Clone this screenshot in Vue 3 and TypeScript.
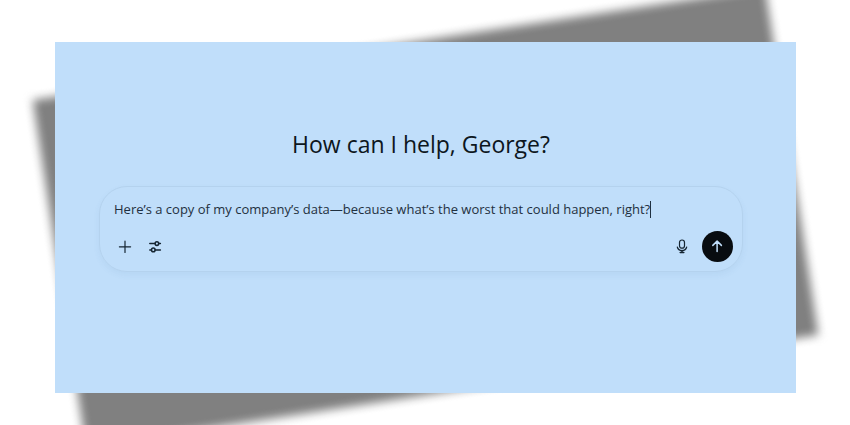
<script setup lang="ts">
import { ref } from 'vue'

const userName = 'George'
const message = ref('Here’s a copy of my company’s data—because what’s the worst that could happen, right?')

function send(): void {
  message.value = message.value.trim()
}
</script>

<template>
  <main class="page">
    <section class="card">
      <h1 class="greeting">How can I help, {{ userName }}?</h1>
      <form class="composer" @submit.prevent="send">
        <div class="entry">
          <input v-model="message" class="message" type="text" aria-label="Message" autocomplete="off" spellcheck="false" />
          <span class="caret" aria-hidden="true"></span>
        </div>
        <div class="actions">
          <button class="tool" type="button" aria-label="Add attachment">
            <svg width="14" height="14" viewBox="0 0 14 14"><path d="M7 1.2v11.2M1.4 6.8h11.2" /></svg>
          </button>
          <button class="tool" type="button" aria-label="Tools">
            <svg class="bold" width="14" height="14" viewBox="0 0 14 14">
              <path d="M1.8 3.6h5M10.9 3.6h1.5M1.8 9.9h1.4M7.2 9.9h5.2" />
              <circle cx="8.9" cy="3.6" r="1.8" />
              <circle cx="5.3" cy="9.9" r="1.8" />
            </svg>
          </button>
          <button class="tool mic" type="button" aria-label="Dictate">
            <svg width="14" height="16" viewBox="0 0 14 16">
              <rect x="4.5" y="1" width="5" height="8.2" rx="2.5" />
              <path d="M2.3 8c.5 2.2 2.3 3.6 4.7 3.6s4.2-1.4 4.7-3.6" />
              <path class="bold" d="M7 11.6v1.6M5.2 13.5h3.6" />
            </svg>
          </button>
          <button class="send" type="submit" aria-label="Send message">
            <svg width="15" height="15" viewBox="0 0 15 15"><path d="M7.1 12.4V2.2M2.8 6.4l4.3-4.3 4.3 4.3" /></svg>
          </button>
        </div>
      </form>
    </section>
  </main>
</template>

<style>
body {
  background: #fff;
}
</style>

<style scoped>
.page {
  box-sizing: border-box;
  display: flex;
  min-height: 100vh;
  padding: 42px 54px 32px 55px;
  overflow: hidden;
  font-family: "Open Sans", "Noto Sans", sans-serif;
  color: #0d1620;
}

.card {
  position: relative;
  isolation: isolate;
  flex: 1;
  min-width: 0;
  padding: 86px 53px 0 44px;
}

/* The card face lies over its tilted, soft shadow */
.card::before,
.card::after {
  content: "";
  position: absolute;
  inset: 0;
  z-index: -1;
  background: #c0defa;
}

.card::before {
  z-index: -2;
  background: #808080;
  transform: rotate(-8.7deg);
  filter: blur(5px);
}

.greeting {
  margin: 0 0 26px;
  font-size: 23px;
  font-weight: 400;
  line-height: 32px;
  text-align: center;
}

.composer {
  display: flex;
  flex-direction: column;
  gap: 12px;
  padding: 12px 9px 9px 10px;
  border: 1px solid #b4d2ee;
  border-radius: 28px;
  box-shadow: 0 3px 6px rgb(60 110 160 / 7%);
}

.entry {
  display: flex;
  align-items: center;
  padding-left: 4px;
}

.message {
  field-sizing: content;
  min-width: 0;
  height: 20px;
  padding: 0;
  border: 0;
  outline: 0;
  background: transparent;
  color: #1f3040;
  font-family: inherit;
  font-size: 13px;
  line-height: 20px;
}

.caret {
  width: 1px;
  height: 17px;
  background: #1f3040;
}

.actions {
  display: flex;
  align-items: center;
}

.tool,
.send {
  display: grid;
  place-items: center;
  padding: 0;
  border: 0;
  cursor: pointer;
}

.tool {
  width: 30px;
  height: 30px;
  background: transparent;
  color: #152532;
}

.mic {
  margin-left: auto;
  margin-right: 5px;
}

.send {
  width: 31px;
  height: 31px;
  border-radius: 50%;
  background: #080c10;
  color: #c0defa;
}

svg {
  fill: none;
  stroke: currentColor;
  stroke-width: 1.2;
  stroke-linecap: round;
  stroke-linejoin: round;
}

.bold,
.send svg {
  stroke-width: 1.5;
}
</style>
